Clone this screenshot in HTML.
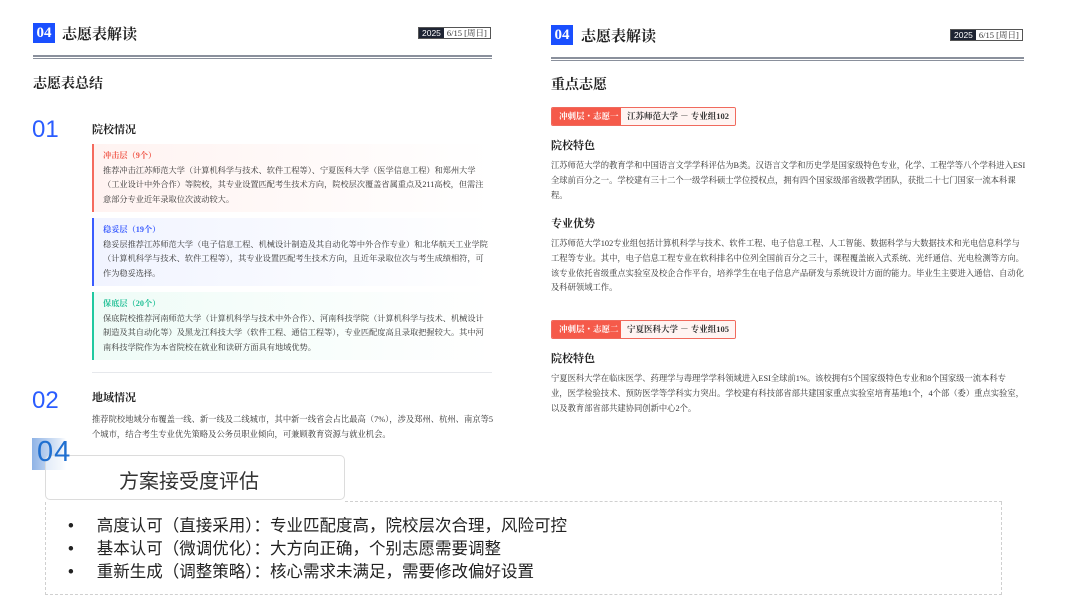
<!DOCTYPE html>
<html><head><meta charset="utf-8"><style>
*{margin:0;padding:0;box-sizing:border-box}
body{width:1077px;height:601px;background:#fff;position:relative;overflow:hidden;font-family:"Liberation Serif","Noto Serif CJK SC",serif;color:#333}
.a{position:absolute;white-space:nowrap}
.num{background:#1a4fff;color:#fff;font-weight:bold;font-size:15px;text-align:center;line-height:20px;width:22px;height:20px}
.tt{font-weight:bold;font-size:15px;color:#222}
.date{font-size:8.5px;height:12px;line-height:10px;border:1px solid #555;display:flex}
.date b{background:#1e2433;color:#fff;font-weight:normal;padding:0 3px;font-family:"Liberation Sans",sans-serif}
.date span{padding:0 3px}
.dl{height:4px;border-top:2px solid #8a909c;border-bottom:1px solid #8a909c}
.h2{font-weight:bold;font-size:14px;color:#222}
.h3{font-weight:bold;font-size:11px;color:#222}
.big{font-family:"Liberation Sans","DejaVu Sans",sans-serif;font-weight:300;font-size:24px;color:#2a5cff}
.box{position:absolute;left:92px;width:400px;height:68px;padding:5px 0 0 9px;font-size:8.2px;line-height:14.5px;color:#333;white-space:nowrap}
.box .l{font-weight:bold;font-size:8.2px}
.p{font-size:8.3px;line-height:14.8px;color:#333}
.tag{position:absolute;left:551px;height:19px;border:1px solid #f06a5d;display:flex;font-size:8.5px;line-height:17px;font-weight:bold;border-radius:2px;white-space:nowrap;overflow:hidden}
.tag .r{background:#f55a4a;color:#fff;padding-left:7px;width:69px}
.tag .w{background:#fff4f2;color:#333;padding-left:6px;width:114px}
</style></head><body>
<!-- left -->
<div class="a num" style="left:33px;top:23px">04</div>
<div class="a tt" style="left:62px;top:23px">志愿表解读</div>
<div class="a date" style="left:418px;top:27px"><b>2025</b><span>6/15 [周日]</span></div>
<div class="a dl" style="left:33px;top:55px;width:459px"></div>
<div class="a h2" style="left:33px;top:73px">志愿表总结</div>
<div class="a big" style="left:32px;top:116px">01</div>
<div class="a h3" style="left:92px;top:121px">院校情况</div>
<div class="box" style="top:144px;border-left:2px solid #f56b5e;background:linear-gradient(90deg,#fff3f1,#fff)"><div class="l" style="color:#f0584a">冲击层（9个）</div>推荐冲击江苏师范大学（计算机科学与技术、软件工程等）、宁夏医科大学（医学信息工程）和郑州大学<br>（工业设计中外合作）等院校，其专业设置匹配考生技术方向，院校层次覆盖省属重点及211高校，但需注<br>意部分专业近年录取位次波动较大。</div>
<div class="box" style="top:218px;border-left:2px solid #3a5cff;background:linear-gradient(90deg,#f1f4ff,#fff)"><div class="l" style="color:#3a5cff">稳妥层（19个）</div>稳妥层推荐江苏师范大学（电子信息工程、机械设计制造及其自动化等中外合作专业）和北华航天工业学院<br>（计算机科学与技术、软件工程等），其专业设置匹配考生技术方向，且近年录取位次与考生成绩相符，可<br>作为稳妥选择。</div>
<div class="box" style="top:292px;border-left:2px solid #20c9a0;background:linear-gradient(90deg,#effcf7,#fff)"><div class="l" style="color:#1fbf95">保底层（20个）</div>保底院校推荐河南师范大学（计算机科学与技术中外合作）、河南科技学院（计算机科学与技术、机械设计<br>制造及其自动化等）及黑龙江科技大学（软件工程、通信工程等），专业匹配度高且录取把握较大。其中河<br>南科技学院作为本省院校在就业和读研方面具有地域优势。</div>
<div class="a" style="left:92px;top:372px;width:400px;height:1px;background:#e6e8ec"></div>
<div class="a big" style="left:32px;top:387px">02</div>
<div class="a h3" style="left:92px;top:389px">地域情况</div>
<div class="a p" style="left:92px;top:413px">推荐院校地域分布覆盖一线、新一线及二线城市，其中新一线省会占比最高（7%），涉及郑州、杭州、南京等5<br>个城市，结合考生专业优先策略及公务员职业倾向，可兼顾教育资源与就业机会。</div>
<!-- right -->
<div class="a num" style="left:551px;top:25px">04</div>
<div class="a tt" style="left:581px;top:25px">志愿表解读</div>
<div class="a date" style="left:950px;top:29px"><b>2025</b><span>6/15 [周日]</span></div>
<div class="a dl" style="left:551px;top:57px;width:473px"></div>
<div class="a h2" style="left:551px;top:74px">重点志愿</div>
<div class="tag" style="top:107px"><div class="r">冲刺层・志愿一</div><div class="w">江苏师范大学 － 专业组102</div></div>
<div class="a h3" style="left:551px;top:137px">院校特色</div>
<div class="a p" style="left:551px;top:159px">江苏师范大学的教育学和中国语言文学学科评估为B类。汉语言文学和历史学是国家级特色专业，化学、工程学等八个学科进入ESI<br>全球前百分之一。学校建有三十二个一级学科硕士学位授权点，拥有四个国家级部省级教学团队，获批二十七门国家一流本科课<br>程。</div>
<div class="a h3" style="left:551px;top:215px">专业优势</div>
<div class="a p" style="left:551px;top:237px">江苏师范大学102专业组包括计算机科学与技术、软件工程、电子信息工程、人工智能、数据科学与大数据技术和光电信息科学与<br>工程等专业。其中，电子信息工程专业在软科排名中位列全国前百分之三十，课程覆盖嵌入式系统、光纤通信、光电检测等方向。<br>该专业依托省级重点实验室及校企合作平台，培养学生在电子信息产品研发与系统设计方面的能力。毕业生主要进入通信、自动化<br>及科研领域工作。</div>
<div class="tag" style="top:320px"><div class="r">冲刺层・志愿二</div><div class="w">宁夏医科大学 － 专业组105</div></div>
<div class="a h3" style="left:551px;top:350px">院校特色</div>
<div class="a p" style="left:551px;top:372px">宁夏医科大学在临床医学、药理学与毒理学学科领域进入ESI全球前1%。该校拥有5个国家级特色专业和8个国家级一流本科专<br>业，医学检验技术、预防医学等学科实力突出。学校建有科技部省部共建国家重点实验室培育基地1个，4个部（委）重点实验室，<br>以及教育部省部共建协同创新中心2个。</div>
<!-- overlay -->
<div class="a" style="left:32px;top:438px;width:34px;height:32px;background:linear-gradient(90deg,#8fb3e6,#dfe9f7 80%,rgba(255,255,255,0))"></div>
<div class="a" style="left:45px;top:455px;width:300px;height:45px;border:1px solid #dcdcdc;border-radius:5px;background:rgba(255,255,255,.6)"></div>
<div class="a" style="left:37px;top:434px;font-family:'Liberation Sans',sans-serif;font-size:29px;line-height:36px;color:#1f6fd0;letter-spacing:1px;z-index:2">04</div>
<div class="a" style="left:119px;top:465px;font-family:'Liberation Sans','Noto Sans CJK SC',sans-serif;font-size:20px;color:#333">方案接受度评估</div>
<div class="a" style="left:45px;top:502px;width:957px;height:93px;border:1px dashed #d0d0d0;border-top:none"></div>
<div class="a" style="left:345px;top:501px;width:657px;border-top:1px dashed #d0d0d0"></div>
<div class="a" style="left:68px;top:515px;font-family:'Liberation Sans','Noto Sans CJK SC',sans-serif;font-size:16.5px;line-height:23px;color:#222">•&nbsp;&nbsp;&nbsp;&nbsp;&nbsp;高度认可（直接采用）：专业匹配度高，院校层次合理，风险可控<br>•&nbsp;&nbsp;&nbsp;&nbsp;&nbsp;基本认可（微调优化）：大方向正确，个别志愿需要调整<br>•&nbsp;&nbsp;&nbsp;&nbsp;&nbsp;重新生成（调整策略）：核心需求未满足，需要修改偏好设置</div>
</body></html>
